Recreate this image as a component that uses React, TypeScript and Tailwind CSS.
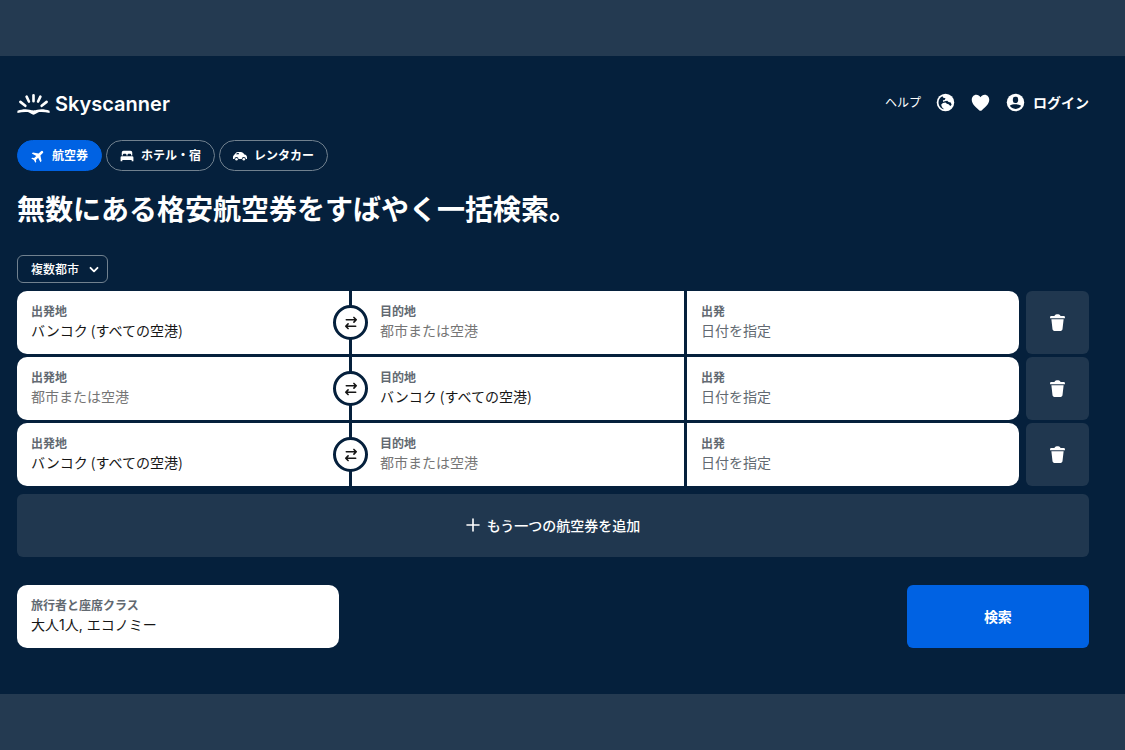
import React, { useState } from 'react';

type City = { from: string; to: string };

const BANGKOK = 'バンコク (すべての空港)';

const initialLegs: City[] = [
  { from: BANGKOK, to: '' },
  { from: '', to: BANGKOK },
  { from: BANGKOK, to: '' },
];

const LogoMark = () => (
  <svg viewBox="0 0 100 64" className="w-[33px] h-[21px]" fill="none" aria-hidden="true">
    <path
      d="M50 4v18M29 8l7 15M71 8l-7 15M10 24l15 12M90 24L75 36"
      stroke="white"
      strokeWidth="8"
      strokeLinecap="round"
    />
    <path
      d="M1 51c14-5 26-6 37-3 5 1 8 2 12 2s7-1 12-2c11-3 23-2 37 3v7c-12-3-22-4-32-3-7 2-11 8-17 8s-10-6-17-8c-10-1-20 0-32 3z"
      fill="white"
    />
  </svg>
);

const PlaneIcon = () => (
  <svg viewBox="0 0 24 24" className="size-[14px]" fill="currentColor" aria-hidden="true">
    <path
      transform="rotate(45 12 12)"
      d="M22.5 16.5v-2.6L14.200 8.400V2.400a2.200 2.200 0 0 0-4.400 0v6l-8.300 5.500v2.600l8.300-2.600v5.300l-2.800 2.100v2L12 22l5 1.300v-2l-2.800-2.100v-5.300z"
    />
  </svg>
);

const BedIcon = () => (
  <svg viewBox="0 0 24 24" className="size-[14px]" fill="currentColor" aria-hidden="true">
    <path d="M6 3h12a3 3 0 0 1 3 3v5h-2V9.500a1.500 1.500 0 0 0-1.500-1.500h-3A1.500 1.500 0 0 0 13 9.500V11h-2V9.500A1.500 1.500 0 0 0 9.500 8h-3A1.500 1.500 0 0 0 5 9.500V11H3V6a3 3 0 0 1 3-3z" />
    <path d="M3 12.500h18a2 2 0 0 1 2 2V21h-3v-2H4v2H1v-6.500a2 2 0 0 1 2-2z" />
  </svg>
);

const CarIcon = () => (
  <svg viewBox="0 0 24 24" className="size-[14px]" fill="currentColor" aria-hidden="true">
    <path
      fillRule="evenodd"
      d="M1.500 10.500 4 7.500A6 6 0 0 1 9 5h4.500c2.500 0 4.500 2 6 4.500 3 .4 4.500 2.200 4.500 5V17h-2a3.500 3.500 0 0 0-7 0H9.500a3.500 3.500 0 0 0-7 0H0v-3.500c0-1.300.5-2.300 1.500-3zM5 9h5V6.800H9C7.200 6.800 6 7.500 5 9z"
    />
    <circle cx="6" cy="17.500" r="2.200" />
    <circle cx="18.500" cy="17.500" r="2.200" />
  </svg>
);

const GlobeIcon = () => (
  <svg viewBox="0 0 24 24" className="size-[21px]" aria-hidden="true">
    <circle cx="12" cy="12" r="10" fill="white" />
    <path
      d="M8.500 4.800C5.700 6 4 8.800 4 12c0 3.800 2.700 7 6.300 7.800L8 17.500l-1-3 2-2 3-.5 1.500 1.500 2 .5 2 2 1.500-1.500-1-2.500-2.500-.5-1.500-1.500-3 .5-1.500 1-.5-2 2-.5 1-2-2.500-.5z"
      fill="#05203c"
    />
  </svg>
);

const HeartIcon = () => (
  <svg viewBox="0 0 24 24" className="size-[21px]" fill="white" aria-hidden="true">
    <path d="M12 21.500c-.5 0-.9-.2-1.300-.5C6 17 2 13.200 2 8.800 2 5.500 4.300 3 7.200 3c2 0 3.800 1.100 4.800 2.900C13 4.100 14.800 3 16.800 3 19.700 3 22 5.500 22 8.800c0 4.400-4 8.200-8.700 12.200-.4.300-.8.500-1.300.5z" />
  </svg>
);

const AccountIcon = () => (
  <svg viewBox="0 0 24 24" className="size-[21px]" aria-hidden="true">
    <circle cx="12" cy="12" r="10" fill="white" />
    <rect x="9" y="5.500" width="6" height="7" rx="2.500" fill="#05203c" />
    <path d="M5.500 15.800c1.500-1.300 4-1.800 6.500-1.800s5 .5 6.500 1.800c-1.400 2.200-3.700 3.500-6.500 3.500s-5.100-1.300-6.500-3.500z" fill="#05203c" />
  </svg>
);

const SwapIcon = () => (
  <svg
    viewBox="0 0 24 24"
    className="size-[14px]"
    fill="none"
    stroke="#161616"
    strokeWidth="2.800"
    strokeLinecap="round"
    strokeLinejoin="round"
    aria-hidden="true"
  >
    <path d="M4 6.500h17M17 2.500l4 4-4 4M20 17.500H3M7 13.500l-4 4 4 4" />
  </svg>
);

const TrashIcon = () => (
  <svg viewBox="0 0 24 24" className="size-[21px]" fill="white" aria-hidden="true">
    <path d="M3.500 6c0-.9.700-1.500 1.500-1.500h3.500C9 3.300 10 2.500 11 2.500h2c1 0 2 .8 2.500 2H19c.8 0 1.500.6 1.500 1.500v1h-17zM5 8.200h14l-1.300 11.600c-.1 1-1 1.800-2 1.800H8.300c-1 0-1.900-.8-2-1.800z" />
  </svg>
);

const ChevronIcon = () => (
  <svg
    viewBox="0 0 24 24"
    className="size-[14px]"
    fill="none"
    stroke="white"
    strokeWidth="3.200"
    strokeLinecap="round"
    strokeLinejoin="round"
    aria-hidden="true"
  >
    <path d="m6 10 6 6 6-6" />
  </svg>
);

const PlusIcon = () => (
  <svg viewBox="0 0 14 14" className="size-[14px]" fill="none" stroke="white" strokeWidth="1.600" strokeLinecap="round" aria-hidden="true">
    <path d="M7 1v12M1 7h12" />
  </svg>
);

const fieldBox = 'flex flex-col justify-center h-[63px] pb-0.5 bg-white text-left';
const fieldLabel = 'block text-xs leading-[18px] font-bold text-[#626971]';
const fieldInput = 'block w-full h-[21px] text-sm leading-[21px] text-[#161616] placeholder:text-[#757575] focus:outline-none';

const tabs = [
  { name: '航空券', icon: <PlaneIcon /> },
  { name: 'ホテル・宿', icon: <BedIcon /> },
  { name: 'レンタカー', icon: <CarIcon /> },
];

const App: React.FC = () => {
  const [legs, setLegs] = useState<City[]>(initialLegs);
  const [activeTab, setActiveTab] = useState(0);

  const updateLeg = (index: number, patch: Partial<City>) => {
    setLegs(legs.map((leg, i) => (i === index ? { ...leg, ...patch } : leg)));
  };

  return (
    <div className="min-h-screen flex flex-col bg-[#243a51] pt-14 font-['Noto_Sans_CJK_JP',sans-serif] text-white">
      <div className="bg-[#05203c] pl-[17px] pr-9 pt-8 pb-[46px]">
        {/* Header */}
        <header className="flex items-center justify-between h-7">
          <a href="#" className="flex items-center gap-[5px] pt-1">
            <LogoMark />
            <span className="font-['Inter',sans-serif] font-semibold text-xl">Skyscanner</span>
          </a>
          <nav className="flex items-center gap-[14px]">
            <a href="#" className="text-xs">ヘルプ</a>
            <button type="button" aria-label="地域設定"><GlobeIcon /></button>
            <button type="button" aria-label="お気に入り"><HeartIcon /></button>
            <button type="button" className="flex items-center gap-[7px] text-sm font-bold">
              <AccountIcon />
              ログイン
            </button>
          </nav>
        </header>

        {/* Product tabs */}
        <div className="flex gap-1 mt-6">
          {tabs.map((tab, i) => (
            <button
              key={tab.name}
              type="button"
              onClick={() => setActiveTab(i)}
              className={`flex items-center gap-[7px] h-[31px] px-[13px] rounded-full border text-xs font-bold ${
                i === activeTab ? 'bg-[#0062e3] border-[#0062e3]' : 'border-[#71818f]'
              }`}
            >
              {tab.icon}
              <span className="pb-0.5">{tab.name}</span>
            </button>
          ))}
        </div>

        <h1 className="mt-5 text-[28px] leading-[34px] font-bold">無数にある格安航空券をすばやく一括検索。</h1>

        {/* Search form */}
        <form className="mt-[30px]" onSubmit={(e) => e.preventDefault()}>
          <div className="relative w-[91px]">
            <select
              aria-label="旅程の種類"
              className="block w-full h-7 pl-[13px] pr-6 appearance-none rounded-md border border-[#71818f] bg-transparent text-xs font-medium text-white"
            >
              <option>複数都市</option>
            </select>
            <span className="absolute inset-y-0 right-[7px] flex items-center pointer-events-none">
              <ChevronIcon />
            </span>
          </div>

          <div className="flex flex-col gap-[3px] mt-2">
            {legs.map((leg, i) => (
              <div key={i} className="flex gap-[7px]">
                <div className="flex-1 grid grid-cols-3 gap-[3px]">
                  <div className={`${fieldBox} relative rounded-l-[10px] pl-[14px] pr-5`}>
                    <label htmlFor={`from-${i}`} className={fieldLabel}>出発地</label>
                    <input
                      id={`from-${i}`}
                      className={fieldInput}
                      value={leg.from}
                      placeholder="都市または空港"
                      onChange={(e) => updateLeg(i, { from: e.target.value })}
                    />
                    <button
                      type="button"
                      aria-label="出発地と目的地を入れ替え"
                      onClick={() => updateLeg(i, { from: leg.to, to: leg.from })}
                      className="absolute z-10 top-[14px] -right-[19px] size-[35px] rounded-full border-[3px] border-[#05203c] bg-white flex items-center justify-center"
                    >
                      <SwapIcon />
                    </button>
                  </div>
                  <div className={`${fieldBox} pl-7 pr-3`}>
                    <label htmlFor={`to-${i}`} className={fieldLabel}>目的地</label>
                    <input
                      id={`to-${i}`}
                      className={fieldInput}
                      value={leg.to}
                      placeholder="都市または空港"
                      onChange={(e) => updateLeg(i, { to: e.target.value })}
                    />
                  </div>
                  <button type="button" className={`${fieldBox} rounded-r-[10px] px-[14px]`}>
                    <span className={fieldLabel}>出発</span>
                    <span className="text-sm leading-[21px] text-[#626971]">日付を指定</span>
                  </button>
                </div>
                <button
                  type="button"
                  aria-label="この航空券を削除"
                  onClick={() => setLegs(legs.filter((_, n) => n !== i))}
                  className="size-[63px] rounded-md bg-[#20374f] flex items-center justify-center"
                >
                  <TrashIcon />
                </button>
              </div>
            ))}
          </div>

          <button
            type="button"
            onClick={() => setLegs([...legs, { from: '', to: '' }])}
            className="flex items-center justify-center gap-[7px] w-full h-[63px] mt-2 pb-0.5 rounded-md bg-[#20374f] text-sm font-medium"
          >
            <PlusIcon />
            もう一つの航空券を追加
          </button>

          <div className="flex justify-between mt-7">
            <button type="button" className={`${fieldBox} w-[30%] rounded-[10px] px-[14px]`}>
              <span className={fieldLabel}>旅行者と座席クラス</span>
              <span className="font-['Inter','Noto_Sans_CJK_JP',sans-serif] text-sm leading-[21px] text-[#161616]">大人1人, エコノミー</span>
            </button>
            <button type="submit" className="w-[17%] h-[63px] pb-0.5 rounded-md bg-[#0062e3] text-sm font-bold">
              検索
            </button>
          </div>
        </form>
      </div>
    </div>
  );
};

export default App;
